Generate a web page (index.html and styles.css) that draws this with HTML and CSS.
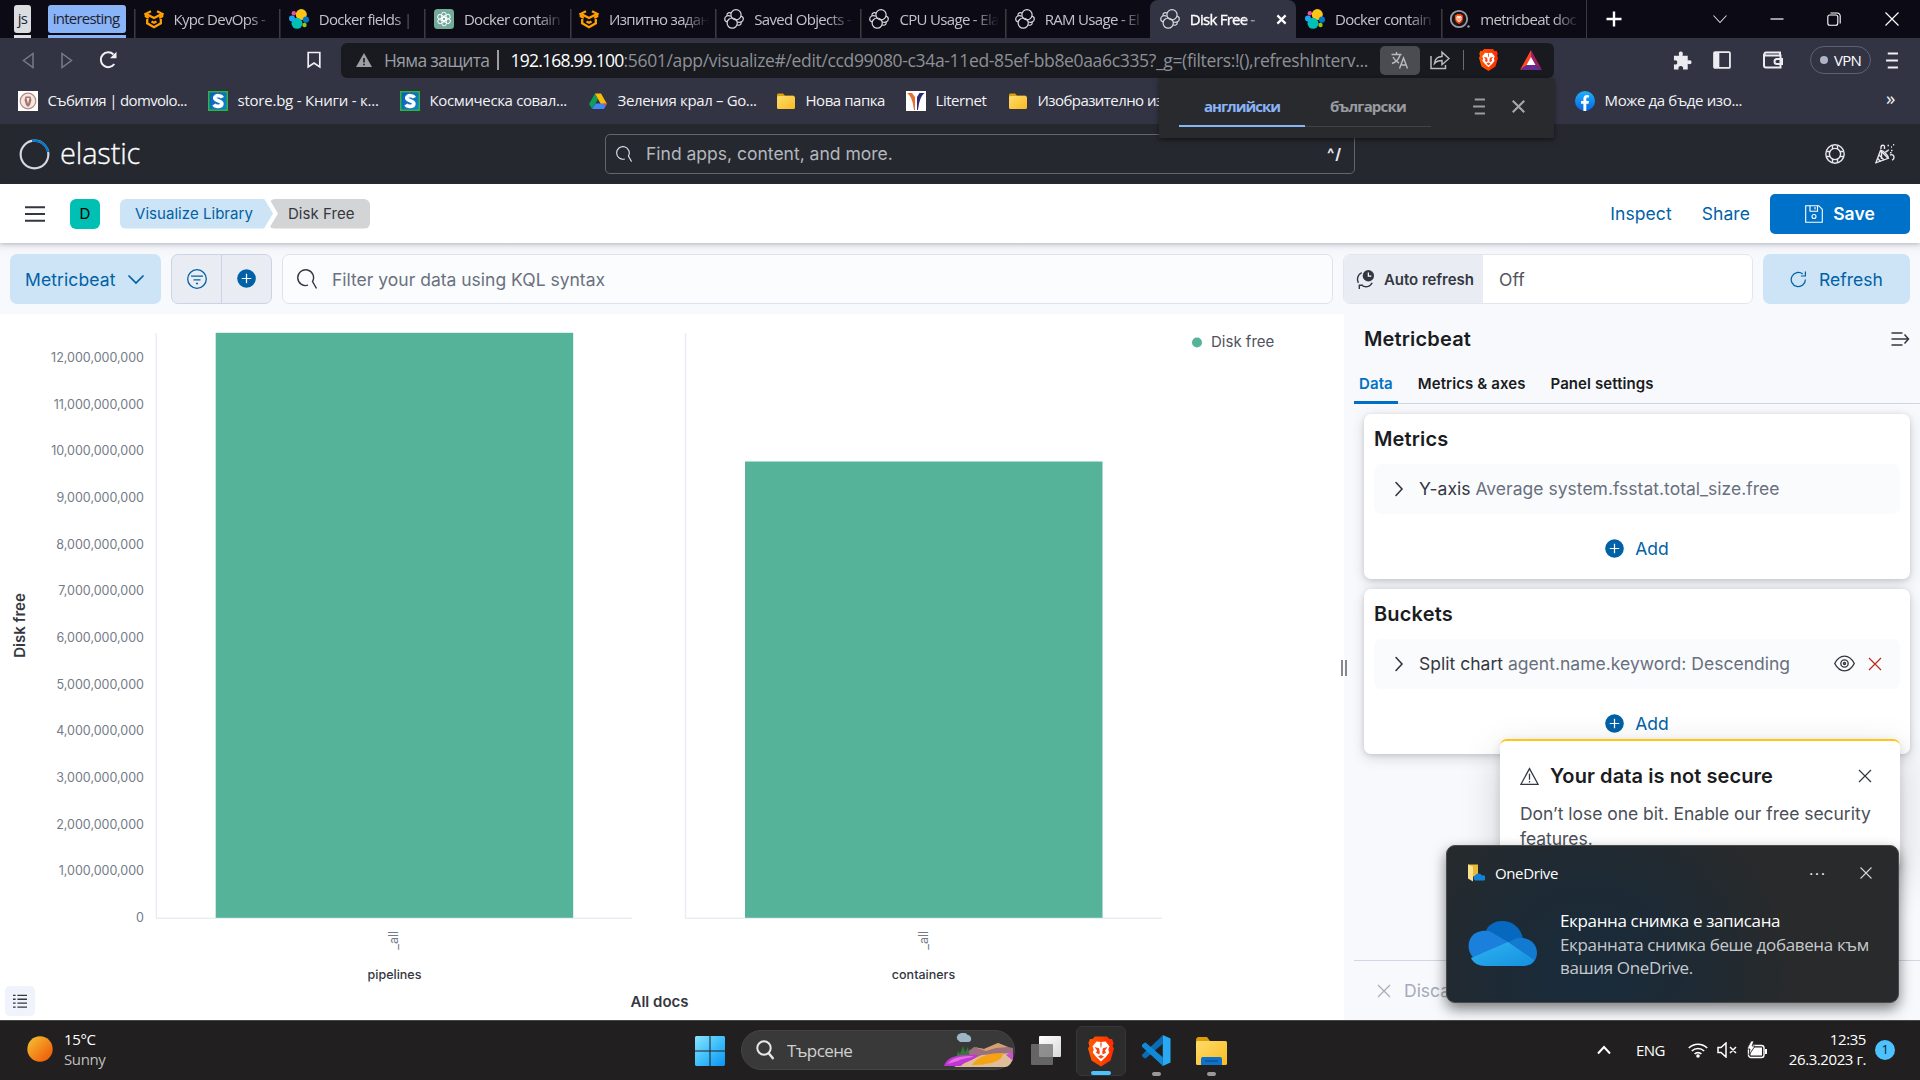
FILE: index.html
```html
<!DOCTYPE html>
<html lang="bg">
<head>
<meta charset="utf-8">
<title>Disk Free - Elastic</title>
<link rel="stylesheet" href="styles.css">
</head>
<body>
<svg class="defs" aria-hidden="true">
  <defs>
    <linearGradient id="g-lion" x1="0" x2="1" y1="0" y2="0"><stop offset="0" stop-color="#ff5a00"/><stop offset="1" stop-color="#ff2a00"/></linearGradient>
    <linearGradient id="g-win" x1="0" y1="0" x2="1" y2="1"><stop offset="0" stop-color="#8be3ff"/><stop offset=".5" stop-color="#3fc0fb"/><stop offset="1" stop-color="#0c92f2"/></linearGradient>
    <linearGradient id="g-sun" x1="0" y1="0" x2="1" y2="1"><stop offset="0" stop-color="#f4c534"/><stop offset=".8" stop-color="#f0670f"/></linearGradient>
    <linearGradient id="g-folder" x1="0" y1="0" x2="1" y2="1"><stop offset="0" stop-color="#ffdb6a"/><stop offset="1" stop-color="#f8bb23"/></linearGradient>
    <linearGradient id="g-s" x1="0" y1="0" x2="1" y2="1"><stop offset="0" stop-color="#0b5fb0"/><stop offset="1" stop-color="#1285cc"/></linearGradient>
    <linearGradient id="g-fb" x1="0" y1="0" x2="0" y2="1"><stop offset="0" stop-color="#1fb0fb"/><stop offset="1" stop-color="#0666e3"/></linearGradient>
    <linearGradient id="g-cloud" x1="0" y1="0" x2="1" y2="1"><stop offset="0" stop-color="#2eb4f0"/><stop offset="1" stop-color="#1590e0"/></linearGradient>
    <linearGradient id="g-task" x1="0" y1="0" x2="1" y2="1"><stop offset="0" stop-color="#ffffff"/><stop offset="1" stop-color="#d8d8d8"/></linearGradient>
  </defs>
  <symbol id="i-softuni" viewBox="0 0 20 20"><g fill="none" stroke="#ffa000" stroke-width="2.300"><path d="M7 2.200 1.800 4.800 10 9l8.200-4.200L13 2.200"/><path d="M1.800 4.800v2.600l3 1.500M18.200 4.800v2.600l-3 1.500"/><path d="M3.200 10v4.300L10 18.200l6.800-3.900V10"/><path d="M7.500 12.500 10 13.800l2.500-1.300"/></g></symbol>
  <symbol id="i-elastic" viewBox="0 0 20 20"><circle cx="12.300" cy="5.600" r="5.500" fill="#fec514"/><circle cx="8" cy="14.300" r="5.500" fill="#00bfb3"/><circle cx="3" cy="9.600" r="3" fill="#1ba9f5"/><circle cx="17" cy="10.700" r="3.100" fill="#0077cc"/><circle cx="4.800" cy="4.200" r="2.200" fill="#f04e98"/><circle cx="15.500" cy="16" r="2.200" fill="#93c90e"/></symbol>
  <symbol id="i-cluster" viewBox="0 0 20 20"><g fill="none" stroke="#d6d8dc" stroke-width="1.200"><circle cx="12" cy="5.800" r="5.100"/><circle cx="8.200" cy="14.100" r="5.100"/><path d="M6.800 7.200C4 5.800.7 7.200.7 10c0 1.600.9 2.500 2.500 2.800M13.200 12.700c2.800 1.500 6.100 0 6.100-2.800 0-1.500-.9-2.500-2.400-2.800"/><path d="M7 4.200c-1.600-1.200-4-.3-4 1.600 0 .4 0 .7.200 1M13.200 15.700c1.600 1.200 4 .3 4-1.600 0-.4-.1-.8-.3-1.200"/></g></symbol>
  <symbol id="i-gpt" viewBox="0 0 20 20"><rect width="20" height="20" rx="3.500" fill="#74aa9c"/><g fill="none" stroke="#fff" stroke-width=".9"><rect x="7.600" y="3.200" width="4.500" height="8.500" rx="2.200"/><rect x="7.600" y="3.200" width="4.500" height="8.500" rx="2.200" transform="rotate(60 10 10)"/><rect x="7.600" y="3.200" width="4.500" height="8.500" rx="2.200" transform="rotate(120 10 10)"/><rect x="7.600" y="3.200" width="4.500" height="8.500" rx="2.200" transform="rotate(180 10 10)"/><rect x="7.600" y="3.200" width="4.500" height="8.500" rx="2.200" transform="rotate(240 10 10)"/><rect x="7.600" y="3.200" width="4.500" height="8.500" rx="2.200" transform="rotate(300 10 10)"/></g></symbol>
  <symbol id="i-lion" viewBox="0 0 26 30"><path fill="url(#g-lion)" d="M7 0h12l2.500 2.600L24 2.500l1.600 4-1 3L26 12l-3.500 12L13 30 3.500 24 0 12l1.400-2.500-1-3L2 2.500l2.500.1z"/><path fill="#fff" d="M13 5.500 17.500 5l4 4.800-1.200 3.500 1 2.700-3.500 4.500L13 25l-4.800-4.500L4.700 16l1-2.700L4.500 9.800 8.500 5z"/><path fill="#fc4510" d="m6.500 10.500 4.500 1.300.8 3.700-.5 2.500L8 16.200l1-2.200zM19.500 10.500 15 11.800l-.8 3.700.5 2.500 3.300-1.800-1-2.200zM10 20l3-1.500 3 1.500-3 2.200zM12.300 6h1.400l-.3 5h-.8z"/></symbol>
  <symbol id="i-bravesearch" viewBox="0 0 20 20"><circle cx="9" cy="10" r="8.200" fill="#15151f" stroke="#9c9ca4" stroke-width="1.800"/><svg x="4.800" y="5" width="8.500" height="10"><use href="#i-lion"/></svg><circle cx="18.500" cy="17.500" r="1.200" fill="#9c9ca4"/></symbol>
  <symbol id="i-folder" viewBox="0 0 20 20"><path fill="#dca10f" d="M1 4.500C1 3 1.500 2.500 3 2.500h4l2 2h8.500V9H1z"/><rect x="1" y="5" width="18" height="13" rx="1.500" fill="url(#g-folder)"/></symbol>
  <symbol id="i-s" viewBox="0 0 20 20"><rect x=".7" y=".7" width="18.600" height="18.600" fill="url(#g-s)" stroke="#2db83d" stroke-width="1.400"/><path fill="none" stroke="#fff" stroke-width="3.600" d="M14.300 6.700C13.300 4.300 6.700 3.600 6.700 7c0 3.200 7.200 2.200 7.200 5.700 0 3.400-6.500 3.400-8 .8"/></symbol>
  <symbol id="i-x" viewBox="0 0 16 16"><path d="M2 2l12 12M14 2 2 14" fill="none" stroke="currentColor" stroke-width="1.200"/></symbol>
  <symbol id="i-plus" viewBox="0 0 20 20"><circle cx="10" cy="10" r="9.800" fill="#0061a6"/><path d="M10 5v10M5 10h10" stroke="#fff" stroke-width="1.300"/></symbol>
  <symbol id="i-mag" viewBox="0 0 20 20"><path d="M11 16.200A7.900 7.900 0 1 1 15.500 12.600L19.500 19.500" fill="none" stroke="currentColor" stroke-width="1.400"/></symbol>
  <symbol id="i-chev" viewBox="0 0 16 16"><path d="m5 1.500 6 6.500-6 6.500" fill="none" stroke="#343741" stroke-width="1.600" stroke-linecap="round"/></symbol>
  <symbol id="i-menu" viewBox="0 0 14 20"><path d="M2 1.700h12M0 10h14M2 18.300h12" stroke="currentColor" stroke-width="2.200"/></symbol>
</svg>

<div class="screen">
<header class="tabstrip">
  <div class="group chip-js"><span>js</span></div>
  <div class="group chip-int"><span>interesting</span></div>
  <div class="tab first"><svg class="i20"><use href="#i-softuni"/></svg><span>Курс DevOps -</span></div>
  <div class="tab"><svg class="i20"><use href="#i-elastic"/></svg><span>Docker fields |</span></div>
  <div class="tab"><svg class="i20"><use href="#i-gpt"/></svg><span>Docker contain</span></div>
  <div class="tab"><svg class="i20"><use href="#i-softuni"/></svg><span>Изпитно задан</span></div>
  <div class="tab"><svg class="i20"><use href="#i-cluster"/></svg><span>Saved Objects -</span></div>
  <div class="tab"><svg class="i20"><use href="#i-cluster"/></svg><span>CPU Usage - Ela</span></div>
  <div class="tab"><svg class="i20"><use href="#i-cluster"/></svg><span>RAM Usage - El</span></div>
  <div class="tab active"><svg class="i20"><use href="#i-cluster"/></svg><span>Disk Free -</span><svg class="tabx" viewBox="0 0 12 12"><path d="m1.500 1.500 9 9m0-9-9 9" stroke="#fff" stroke-width="2.400"/></svg></div>
  <div class="tab after"><svg class="i20"><use href="#i-elastic"/></svg><span>Docker contain</span></div>
  <div class="tab"><svg class="i20"><use href="#i-bravesearch"/></svg><span>metricbeat doc</span></div>
  <div class="winctl">
    <svg class="newtab" viewBox="0 0 16 16"><path d="M8 .5v15M.5 8h15" stroke="#fff" stroke-width="2.400"/></svg>
    <svg class="wc1" viewBox="0 0 14 14"><path d="m.5 3.500 6.500 7 6.500-7" fill="none" stroke="#d8d8dc" stroke-width="1.100"/></svg>
    <svg class="wc2" viewBox="0 0 14 14"><path d="M.5 7h13" stroke="#fff" stroke-width="1.200"/></svg>
    <svg class="wc3" viewBox="0 0 14 14"><g fill="none" stroke="#fff" stroke-width="1.100"><rect x=".8" y="3" width="10" height="10.200" rx="2"/><path d="M3.500 1h6.700a3 3 0 0 1 3 3v7.500"/></g></svg>
    <svg class="wc4" viewBox="0 0 14 14"><path d="m.5.5 13 13m0-13-13 13" stroke="#fff" stroke-width="1.200"/></svg>
  </div>
</header>

<div class="toolbar">
  <svg class="t-back" viewBox="0 0 12 16"><path d="M11 1 1.500 8 11 15z" fill="none" stroke="#787a88" stroke-width="1.500"/></svg>
  <svg class="t-fwd" viewBox="0 0 12 16"><path d="M1 1l9.500 7L1 15z" fill="none" stroke="#787a88" stroke-width="1.500"/></svg>
  <svg class="t-reload" viewBox="0 0 18 18"><path d="M15.300 13A7.400 7.400 0 1 1 14.500 3.500" fill="none" stroke="#f0f0f4" stroke-width="2"/><path d="M17.500.8v6.500h-6.500z" fill="#f0f0f4"/></svg>
  <svg class="t-bm" viewBox="0 0 14 17"><path d="M1.200 1h11.600v14.500L7 11.500l-5.800 4z" fill="none" stroke="#f0f0f4" stroke-width="1.700"/></svg>
  <div class="url">
    <svg class="u-warn" viewBox="0 0 16 14"><path d="M8 0l8 14H0z" fill="#9c9fa3"/><path d="M8 5v4.500m0 1.200v1.600" stroke="#181a20" stroke-width="1.600"/></svg>
    <span class="u-sec">Няма защита</span><i class="u-div"></i>
    <span class="u-addr"><b>192.168.99.100</b>:5601/app/visualize#/edit/ccd99080-c34a-11ed-85ef-bb8e0aa6c335?_g=(filters:!(),refreshInterv...</span>
    <span class="u-tr"><svg viewBox="0 0 18 18"><g fill="none" stroke="#b9bbc0" stroke-width="1.400"><path d="M.5 3.500h10M5.500 1v2.500M2 6c1.500 3 4 5 6 6M9 4c-1 4-4 7-8 8.500"/><path d="m8.500 17.500 4-10.500 4 10.500M10 14h5.500"/></g></svg></span>
    <svg class="u-share" viewBox="0 0 20 20"><g fill="none" stroke="#b9bbc0" stroke-width="1.500"><path d="M1 6v12.500h14.500V15"/><path d="M4.500 13.500C5 9 8 6.500 12 6.500V2.200l7 6.300-7 6.200v-4.200c-3.500 0-5.800 1-7.500 3z"/></g></svg>
    <i class="u-div2"></i>
    <svg class="u-lion"><use href="#i-lion"/></svg>
    <svg class="u-bat" viewBox="0 0 22 20"><path fill="#ff4724" d="M11 0 0 20l7-5 4-7z"/><path fill="#9e1f63" d="m11 0 11 20-7-5-4-7z"/><path fill="#662d91" d="M0 20l7-5h8l7 5z"/><path fill="#fff" d="m11 7 4.500 8h-9z"/></svg>
  </div>
  <svg class="t-puz" viewBox="0 0 20 20"><path fill="#ececf0" d="M1 5h5.500C5.500 2 6.500.5 8.200.5s2.800 1.500 1.800 4.500h5.500v5c3-1 4 .2 4 1.800s-1.200 2.700-4 1.700v6h-5c.8-2.500-.5-3.800-2.300-3.800S5 17 6 19.500H1v-5.500c2.500.7 3.500-.5 3.500-2S3.300 9.300 1 10z"/></svg>
  <svg class="t-side" viewBox="0 0 17 17"><rect x="1" y="1" width="15" height="15" rx="1" fill="none" stroke="#ececf0" stroke-width="1.700"/><path d="M1 1h5v15H1z" fill="#ececf0"/></svg>
  <svg class="t-wal" viewBox="0 0 20 17"><g fill="none" stroke="#ececf0" stroke-width="2"><path d="M17 5V1H3C1 1 1 4 3 4h14.500v12H3c-1.200 0-2-.8-2-2V2.500"/><path d="M20 7.500h-6a2.500 2.500 0 0 0 0 5h5V7"/></g></svg>
  <span class="vpn"><i></i>VPN</span>
  <svg class="t-menu"><use href="#i-menu"/></svg>
</div>

<nav class="bookmarks">
  <div class="bm w190"><svg class="i20" viewBox="0 0 20 20"><rect width="20" height="20" fill="#fff"/><circle cx="10" cy="10" r="7.800" fill="#f2e7e2" stroke="#b78d82" stroke-width="1.200"/><path d="M7.500 5.500h5l1 3.500-1.500 5-2 2-2-2L6.500 9z" fill="#a5746c"/><path d="m8.500 7 1.500 6 1.500-6z" fill="#f4ece6"/></svg><span>Събития | domvolo...</span></div>
  <div class="bm w192"><svg class="i20"><use href="#i-s"/></svg><span>store.bg - Книги - к...</span></div>
  <div class="bm w188"><svg class="i20"><use href="#i-s"/></svg><span>Космическа совал...</span></div>
  <div class="bm w188"><svg class="i20" viewBox="0 0 20 20"><path fill="#0f9d58" d="M7 2.500 1 13l3.200 5L10 8z"/><path fill="#fbbc04" d="M7 2.500h6L19 13h-6.200z"/><path fill="#4285f4" d="M7.500 12.500H19L16 18H4.200z"/><path fill="#ea4335" d="M15.500 12.500H19l-1.500 3z"/></svg><span>Зеления крал – Go...</span></div>
  <div class="bm w130"><svg class="i20"><use href="#i-folder"/></svg><span>Нова папка</span></div>
  <div class="bm w102"><svg class="i20" viewBox="0 0 20 20"><rect width="20" height="20" fill="#fff"/><path d="M1 2h5l3 4v13H8C7 12 6 6 1 2z" fill="#e8702a"/><path d="M18.500 2h-5L11 6v13h1c1-7 2-13 6.500-17z" fill="#2b2a78"/></svg><span>Liternet</span></div>
  <div class="bm wcut"><svg class="i20"><use href="#i-folder"/></svg><span>Изобразително изк...</span></div>
  <div class="bm wfb"><svg class="i20" viewBox="0 0 20 20"><circle cx="10" cy="10" r="10" fill="url(#g-fb)"/><path fill="#fff" d="M8.400 20v-7.200H6V10h2.400V7.800C8.400 5.300 9.800 4 12 4l1.900.2v2.300h-1.200c-1.100 0-1.400.7-1.400 1.400V10h2.600l-.4 2.800h-2.200V20z"/></svg><span>Може да бъде изо...</span></div>
  <span class="more">»</span>
</nav>

<header class="ehead">
  <svg class="ring" viewBox="0 0 32 32"><circle cx="16" cy="16" r="14.300" fill="none" stroke="#d3dae6" stroke-width="2.200"/><path d="M13.500 1.900A14.300 14.300 0 0 1 30 13.500" fill="none" stroke="#0077cc" stroke-width="2.400"/></svg>
  <span class="word">elastic</span>
  <div class="gsearch"><svg class="i16"><use href="#i-mag"/></svg><span>Find apps, content, and more.</span><b>^/</b></div>
  <svg class="help" viewBox="0 0 20 20"><g fill="none" stroke="#e6e8ec" stroke-width="1.400"><circle cx="10" cy="10" r="9.200"/><circle cx="10" cy="10" r="5.600"/><path d="M7.500 1.300v4M12.500 1.300v4M7.500 14.700v4M12.500 14.700v4M1.300 7.500h4M1.300 12.500h4M14.700 7.500h4M14.700 12.500h4"/></g></svg>
  <svg class="cheer" viewBox="0 0 20 20"><g fill="none" stroke="#e6e8ec" stroke-width="1.400"><path d="M5.500 6.500.9 18.800l12.300-4.500z"/><path d="M5.500 6.500c2-1 8.500 5.500 7.700 7.800M4 11l5 5M2.700 14.500l3 3M6.500 8v7"/><path d="M6 5V3.500C6 .5 9.500.5 9.500 3v2M10.500 8.500c.5-2 3-1 3-3M15 11c2.500-1 4 .5 4 2.500s-1 2-2 2.500"/><path d="M12.500 1.500h1.500M16 3h1M18 .8h1.200M16 6.500h2.500M15 8.800h1.500" stroke-dasharray="1.500 1"/></g></svg>
</header>

<div class="appbar">
  <svg class="burger" viewBox="0 0 20 16"><path d="M0 1.200h20M0 8h20M0 14.800h20" stroke="#343741" stroke-width="2"/></svg>
  <span class="avatar">D</span>
  <span class="crumb c1">Visualize Library</span><span class="crumb c2">Disk Free</span>
  <div class="actions"><span>Inspect</span><span>Share</span>
    <span class="save"><svg viewBox="0 0 18 18"><g fill="none" stroke="#fff" stroke-width="1.100"><path d="M.7.7h13l3.600 3.600v13H.7z"/><path d="M5 .7v5.600h7.500V.7M10 2v2.500"/><circle cx="9" cy="11.500" r="2"/></g></svg>Save</span></div>
</div>

<div class="filterbar">
  <div class="dv">Metricbeat<svg viewBox="0 0 16 16"><path d="m1 5 7 7 7-7" fill="none" stroke="#0061a6" stroke-width="1.700" stroke-linecap="round"/></svg></div>
  <div class="fgroup"><span><svg class="i20" viewBox="0 0 20 20"><g fill="none" stroke="#0061a6" stroke-width="1.300"><circle cx="10" cy="10" r="9.300"/><path d="M4 7.200h12M6.500 10.800h7M9 14.500h2"/></g></svg></span><span><svg class="i19"><use href="#i-plus"/></svg></span></div>
  <div class="kql"><svg class="i20"><use href="#i-mag"/></svg><span>Filter your data using KQL syntax</span></div>
  <div class="auto"><div><svg class="i19" viewBox="0 0 19 20"><circle cx="12.500" cy="6" r="6" fill="#343741"/><path d="M12.500 2.500V6.500h3.200" fill="none" stroke="#fff" stroke-width="1.300"/><path d="M5.500 2.800C1 5 0 10 2 13.500M16.500 13.500c-2 4.500-7.500 5.200-11 2.500M7 16H3v4" fill="none" stroke="#343741" stroke-width="1.500"/></svg>Auto refresh</div><span>Off</span></div>
  <div class="refresh"><svg viewBox="0 0 18 18"><path d="M16.300 9A7.500 7.500 0 1 1 13.500 3.200M16.300.5v4.800h-4.800" fill="none" stroke="#0061a6" stroke-width="1.300"/></svg>Refresh</div>
</div>

<main class="work">
  <section class="viz">
    <svg class="chart" width="1344" height="706" viewBox="0 314 1344 706">
      <g stroke="#eaedf3" stroke-width="1.500"><path d="M156.300 333v585M156 918.300H632M685.500 333v585M685 918.300h477"/></g>
      <g fill="#54b399"><rect x="215.700" y="332.800" width="357.500" height="585"/><rect x="745" y="461.500" width="357.500" height="456.300"/></g>
      <g class="tick">
        <text x="144" y="362">12,000,000,000</text><text x="144" y="408.700">11,000,000,000</text><text x="144" y="455.300">10,000,000,000</text><text x="144" y="502">9,000,000,000</text><text x="144" y="548.700">8,000,000,000</text><text x="144" y="595.300">7,000,000,000</text><text x="144" y="642">6,000,000,000</text><text x="144" y="688.700">5,000,000,000</text><text x="144" y="735.300">4,000,000,000</text><text x="144" y="782">3,000,000,000</text><text x="144" y="828.700">2,000,000,000</text><text x="144" y="875.300">1,000,000,000</text><text x="144" y="922">0</text>
        <text transform="translate(398 931) rotate(-90)">_all</text><text transform="translate(927.500 931) rotate(-90)">_all</text>
      </g>
      <g class="sub"><text x="394.500" y="979">pipelines</text><text x="923.500" y="979">containers</text></g>
      <g class="axis"><text x="659.500" y="1006.500">All docs</text><text transform="translate(25 625.500) rotate(-90)">Disk free</text></g>
      <circle cx="1197" cy="342.500" r="5" fill="#54b399"/><text class="leg" x="1211" y="347">Disk free</text>
    </svg>
    <span class="listbtn"><svg viewBox="0 0 16 16"><path d="M0 1.500h3M5 1.500h11M0 6h3M5 6h11M0 10.500h3M5 10.500h11M0 15h3M5 15h11" stroke="#343741" stroke-width="1.500"/></svg></span>
    <span class="grip"></span>
  </section>
  <aside class="side">
    <div class="shead"><h2>Metricbeat</h2><svg viewBox="0 0 19 16"><path d="M1 2h11M1 8h17M1 14h11M14 3.500 18 8l-4 4.500" fill="none" stroke="#343741" stroke-width="1.500"/></svg></div>
    <div class="tabs"><span class="on">Data</span><span>Metrics &amp; axes</span><span>Panel settings</span></div>
    <div class="cards">
      <div class="card"><h3>Metrics</h3><div class="row"><svg class="i16"><use href="#i-chev"/></svg><span>Y-axis <em>Average system.fsstat.total_size.free</em></span></div><div class="add"><svg class="i19"><use href="#i-plus"/></svg>Add</div></div>
      <div class="card"><h3>Buckets</h3><div class="row"><svg class="i16"><use href="#i-chev"/></svg><span>Split chart <em>agent.name.keyword: Descending</em></span><svg class="eye" viewBox="0 0 20 16"><g fill="none" stroke="#343741" stroke-width="1.300"><path d="M.7 8C3 3.500 6 1 10 1s7 2.500 9.300 7C17 12.500 14 15 10 15S3 12.500.7 8z"/><circle cx="10" cy="8" r="3.500"/><circle cx="10" cy="8" r="1"/></g></svg><svg class="i16 red"><use href="#i-x"/></svg></div><div class="add"><svg class="i19"><use href="#i-plus"/></svg>Add</div></div>
    </div>
    <div class="foot"><svg class="i16"><use href="#i-x"/></svg>Discard</div>
  </aside>
</main>

<footer class="taskbar">
  <svg class="sun" viewBox="0 0 26 26"><circle cx="13" cy="13" r="12.700" fill="url(#g-sun)"/></svg>
  <div class="wx"><span>15°C</span><span>Sunny</span></div>
  <svg class="win" viewBox="0 0 29 29"><path fill="url(#g-win)" d="M1 0h13v14H0V1zM15 0h13l1 1v13H15zM0 15h14v14H1l-1-1zM15 15h14v13l-1 1H15z"/></svg>
  <div class="tsearch"><svg class="tmag" viewBox="0 0 18 20"><circle cx="8" cy="8" r="6.700" fill="none" stroke="#e8e8e8" stroke-width="2"/><path d="m12.500 13 5 6" stroke="#e8e8e8" stroke-width="2.400"/></svg><span>Търсене</span>
    <svg class="art" viewBox="0 0 70 34"><path d="M15 8a4 4 0 0 1 1-7.500C19-.8 23 0 23.500 2 27.500 2 28.500 8 25 9H16z" fill="#9db6c6"/><path d="M22 20 30 14l10 2 14-6 10 4 5 1v11H22z" fill="#9b7180"/><path d="M30 14l10 2 14-6 10 4-12 1-10 3z" fill="#d6a06c"/><path d="M12 25l2-7 2 3 3-8 2 6 3-5 2 11z" fill="#2f7a35"/><path d="M10 34 38 22l31-2v3c0 6-4 11-8 11z" fill="#dfbd98"/><path d="M0 33c3-11 18-12 34-11-4 6-13 6-17 11z" fill="#c136d0"/><path d="M3 31c6-7 14-8 27-8-6 3-12 2-16 5z" fill="#e070e6"/><path d="M28 32c6-9 17-12 31-12 0 9-16 12-31 12z" fill="#f5a314"/><path d="M62 22l7-4v10z" fill="#c552ca"/></svg></div>
  <svg class="tview" viewBox="0 0 30 29"><rect x="8" y="0" width="22" height="21" rx="1" fill="url(#g-task)"/><rect x="0" y="8" width="22" height="21" rx="1" fill="#777" fill-opacity=".8"/></svg>
  <div class="app on"><svg class="tlion"><use href="#i-lion"/></svg><i></i></div>
  <div class="app code"><svg viewBox="0 0 30 32"><path d="M.5 20.500 18 4l4-4v9L4 24.500 1 22.500z" fill="#0a6cb4"/><path d="M.5 10 4 7.500 22 23v9l-4-4L.5 12z" fill="#1289d6"/><path d="m22 0 8 3.500v25L22 32z" fill="#29a9f2"/></svg><i></i></div>
  <div class="app files"><svg viewBox="0 0 31 28"><path d="M0 3c0-2 1-3 3-3h8l3 4h14v8H0z" fill="#dc9b08"/><rect y="4" width="31" height="24" rx="1.500" fill="url(#g-folder)"/><path d="M5 28v-6c0-1.500 1-2 2-2h16.500c1.500 0 2.500.5 2.500 2v6z" fill="#0f72c8"/><path d="M9 24h13" stroke="#0a4e96" stroke-width="1.300"/></svg><i></i></div>
  <div class="tray">
    <svg class="up" viewBox="0 0 14 10"><path d="m1 8.500 6-6.500 6 6.500" fill="none" stroke="#fff" stroke-width="2"/></svg>
    <span class="eng">ENG</span>
    <svg class="wifi" viewBox="0 0 20 16"><g fill="none" stroke="#fff" stroke-width="1.600"><path d="M.8 6a13 13 0 0 1 18.400 0M3.800 9a8.800 8.800 0 0 1 12.400 0M6.600 12a4.800 4.800 0 0 1 6.800 0"/></g><circle cx="10" cy="14" r="1.800" fill="#fff"/></svg>
    <svg class="snd" viewBox="0 0 20 16"><g fill="none" stroke="#fff" stroke-width="1.500"><path d="M1 5.500h3L9 1v14l-5-4.500H1zM13 5l6 6m0-6-6 6"/></g></svg>
    <svg class="batt" viewBox="0 0 20 18"><rect x="1.500" y="4.500" width="15.500" height="12" rx="2.500" fill="none" stroke="#fff" stroke-width="1.400"/><path d="M7 6.500h8v8H3.500V12zM18 8h2v5h-2z" fill="#fff"/><path d="M4 0 0 8h3l-1 6 6-9H5l2-5z" fill="#fff" stroke="#201f1f" stroke-width=".8"/></svg>
    <div class="clock"><span>12:35</span><span>26.3.2023 г.</span></div>
    <span class="badge">1</span>
  </div>
</footer>

<div class="translate"><span class="tr-on">английски</span><span class="tr-off">български</span><svg class="tr-m"><use href="#i-menu"/></svg><svg class="tr-x" viewBox="0 0 12 12"><path d="m.7.7 10.600 10.600m0-10.600L.7 11.300" stroke="#a6a8ac" stroke-width="1.900"/></svg></div>

<div class="secure">
  <div class="sec-h"><svg viewBox="0 0 18 17"><g fill="none" stroke="#343741" stroke-width="1.200"><path d="M9 1 17.200 16H.8z"/><path d="M9 6v5.500M9 12.700v1.600"/></g></svg><h3>Your data is not secure</h3><svg class="i16"><use href="#i-x"/></svg></div>
  <p>Don’t lose one bit. Enable our free security<br>features.</p>
</div>

<div class="toast">
  <div class="t-h"><svg viewBox="0 0 17 17"><path d="M0 0h10v12H0z" fill="#e9b83c"/><path d="M0 0 5 2v15L0 14z" fill="#ffe08a"/><path d="M7 16a3 3 0 0 1 0-5 4 4 0 0 1 7 0 2.500 2.500 0 0 1 2 5z" fill="#1283d8"/></svg><span>OneDrive</span><b>···</b><svg class="t-x" viewBox="0 0 12 12"><path d="m.5.5 11 11m0-11-11 11" stroke="#d5d5d5" stroke-width="1.100"/></svg></div>
  <div class="t-b"><svg viewBox="0 0 69 45"><path d="M17 12C20 3 27 0 34 0c11 0 19 7 21 18L40 28z" fill="#0668bf"/><path d="M14 10c6-1 10 1 14 4l14 8-30 18C-3 37-4 12 14 10z" fill="#1b80dc"/><path d="M40 22c4-3 9-6 15-5 18 2 17 24 6 27z" fill="#137ad2"/><path d="M3 37l37-16 26 18c-2 4-6 6-11 6H17C11 45 5 42 3 37z" fill="url(#g-cloud)"/></svg><p><b>Екранна снимка е записана</b><br>Екранната снимка беше добавена към<br>вашия OneDrive.</p></div>
</div>
</div>
</body>
</html>
```
FILE: styles.css
```css
*{box-sizing:border-box}
body{margin:0;background:#000}
.defs{position:absolute;width:0;height:0}
svg{display:block;flex:none}
h2,h3,p{margin:0}
.screen{position:relative;width:1920px;height:1080px;overflow:hidden;display:flex;flex-direction:column;font-family:"Inter","Liberation Sans",sans-serif;color:#343741}
.i20{width:20px;height:20px}
.i19{width:19px;height:19px}
.i16{width:16px;height:16px}
.tabstrip,.toolbar,.bookmarks,.taskbar,.translate,.toast{font-family:"Open Sans","Noto Sans",sans-serif;font-size:15px;letter-spacing:-.045em;white-space:nowrap}

/* browser tabs */
.tabstrip{height:38px;background:#0c0b15;display:flex;align-items:stretch}
.group{height:38px;display:flex;align-items:flex-start;padding-top:5px;border-bottom:3px solid}
.group span{display:block;height:28px;line-height:26px;border-radius:3px;color:#202230;text-align:center;letter-spacing:-.05em}
.chip-js{width:17px;margin-left:14px;border-color:#dcdde0}
.chip-js span{background:#dcdde0;width:17px}
.chip-int{width:78px;margin-left:17px;border-color:#8ab4f8}
.chip-int span{background:#8ab4f8;width:78px;padding-right:2px}
.tab{width:145.200px;display:flex;align-items:center;padding-left:9.500px;gap:10px;position:relative;color:#c3c4c9;background:linear-gradient(#3c3c3e,#3c3c3e) 0 100%/1.500px 29px no-repeat}
.tab.first{margin-left:8px}
.tab span{width:102px;overflow:hidden;line-height:26px;margin-top:-1px;-webkit-mask:linear-gradient(90deg,#000 72%,transparent 98%);mask:linear-gradient(90deg,#000 72%,transparent 98%)}
.tab.active{background:#323443;border-radius:8px 8px 0 0;color:#fff}
.tab.active span{width:74px;-webkit-text-stroke:.35px #fff;letter-spacing:-.05em}
.tab.after{background:none}
.tabx{width:11px;height:11px;margin-left:2px}
.winctl{flex:1;display:flex;align-items:center;border-left:1.500px solid #3c3c3e;padding-left:19px}
.newtab{width:16px;height:16px}
.wc1{width:14px;height:14px;margin-left:91px}
.wc2{width:14px;height:14px;margin-left:43px}
.wc3{width:14px;height:14px;margin-left:43px}
.wc4{width:14px;height:14px;margin-left:44px}

/* address row */
.toolbar{height:45px;background:#323443;display:flex;align-items:center;padding:0 0 1px 22px}
.t-back,.t-fwd{width:12px;height:17px}
.t-fwd{margin-left:27px}
.t-reload{width:18px;height:18px;margin-left:26px}
.t-bm{width:14px;height:18px;margin-left:190px}
.url{width:1213px;height:35px;margin:1px 0 0 20px;background:#181a20;border-radius:6px;display:flex;align-items:center;padding:0 0 1px 15px;font-size:17.500px;color:#8d9095}
.u-warn{width:16px;height:14px}
.u-sec{width:105px;margin-left:12px;color:#9b9ea3}
.u-div{width:1.500px;height:20px;background:#9b9ea3;margin-left:8px}
.u-addr{width:858px;margin-left:12px;letter-spacing:-.0195em}
.u-addr b{font-weight:400;color:#fff;letter-spacing:-.044em}
.u-tr{width:40px;height:29px;margin-left:11px;border-radius:5px;background:#4a4c51;display:flex;align-items:center;justify-content:center}
.u-tr svg{width:18px;height:18px}
.u-share{width:20px;height:20px;margin-left:10px}
.u-div2{width:1.500px;height:20px;background:#696c72;margin-left:13px}
.u-lion{width:21px;height:22px;margin-left:14px}
.u-bat{width:22px;height:20px;margin-left:21px}
.t-puz{width:19px;height:19px;margin-left:119px}
.t-side{width:18px;height:18px;margin-left:21px}
.t-wal{width:20px;height:18px;margin-left:32px}
.vpn{width:61px;height:28px;margin-left:27px;border:1.500px solid #5e6076;border-radius:14px;display:flex;align-items:center;justify-content:center;gap:6px;color:#fff;padding-bottom:1px}
.vpn i{width:8px;height:8px;border-radius:50%;background:#b0b2c8}
.t-menu{width:12px;height:17px;margin-left:15px;color:#f0f0f4}

/* bookmarks */
.bookmarks{height:41px;background:#323443;display:flex;align-items:center;padding:0 0 5px 18px;color:#f3f3f5;letter-spacing:-.024em}
.bm{display:flex;align-items:center;gap:9.500px}
.bm span{margin-top:-2px}
.w190{width:190px;letter-spacing:-.044em}.w192{width:192px;letter-spacing:-.015em}.w188{width:188px}.w130{width:130px;letter-spacing:-.03em}.w102{width:102px;letter-spacing:-.03em}
.wcut{width:567px;letter-spacing:-.038em}
.wfb{width:311px}
.more{font-size:19px;line-height:20px;margin-top:-6px;width:30px}

/* elastic header */
.ehead{height:60px;background:#25282f;display:flex;align-items:center;color:#fff}
.ring{width:31px;height:31px;margin-left:19px}
.word{font:300 29px "Open Sans",sans-serif;letter-spacing:-.006em;margin:-3px 0 0 10px;width:85px;-webkit-text-stroke:.3px #fff}
.gsearch{width:750px;height:40px;margin-left:460px;border:1.500px solid #63666d;border-radius:5px;display:flex;align-items:center;padding:0 12px 1px 10px;font-size:17.500px;letter-spacing:0;color:#b4b7bd}
.gsearch span{margin-left:14px;flex:1}
.gsearch b{color:#e8eaee;font-weight:700;font-size:15px;letter-spacing:.06em}
.gsearch svg{color:#dfe5ef}
.help{width:20px;height:20px;margin-left:470px}
.cheer{width:20px;height:20px;margin-left:30px}

.appbar{height:59px;background:#fff;display:flex;align-items:center;padding:0 10px 0 25px;box-shadow:0 1px 5px rgba(50,60,80,.35);position:relative;font-size:15px}
.burger{width:20px;height:16px}
.avatar{width:30px;height:30px;margin-left:25px;border-radius:6px;background:#00bfb3;color:#000;font-size:15px;line-height:30px;text-align:center}
.crumb{height:30px;line-height:30px;border-radius:6px}
.c1{width:153px;margin-left:20px;padding-left:15px;background:#cce4f5;color:#0061a6;letter-spacing:.003em;clip-path:polygon(0 0,144px 0,100% 50%,144px 100%,0 100%)}
.c2{width:101px;margin-left:-4px;padding-left:19px;background:#d3d4d6;letter-spacing:.003em;clip-path:polygon(0 0,100% 0,100% 100%,0 100%,9px 50%)}
.actions{margin-left:auto;display:flex;align-items:center;font-size:17.500px;letter-spacing:.004em;color:#0061a6}
.actions span+span{margin-left:30px}
.actions .save{width:140px;height:40px;margin-left:20px;border-radius:5px;background:#0071c8;color:#fff;font-weight:600;display:flex;align-items:center;justify-content:center;gap:10px}
.save svg{width:18px;height:18px}

.filterbar{height:71px;background:linear-gradient(#f0f2f6 0,#f8f9fd 14px);display:flex;align-items:center;padding:0 10px;font-size:17.500px;letter-spacing:0;color:#0061a6}
.filterbar>div{height:50px;border-radius:7px;display:flex;align-items:center}
.dv{width:151px;background:#cce4f5;padding:1px 0 0 15px;gap:12px;letter-spacing:.006em}
.dv svg{width:16px;height:16px}
.fgroup{width:101px;margin-left:10px;background:#e9edf3;border:1px solid #ccd3e4}
.fgroup span{flex:1;height:48px;display:flex;align-items:center;justify-content:center}
.fgroup span+span{border-left:1px solid #ccd3e4}
.kql{width:1051px;margin-left:10px;background:#fbfcfe;border:1px solid #dfe2ee;padding:1px 0 0 14px;gap:15px;color:#6a717d}
.kql svg{color:#343741}
.auto{width:410px;margin-left:10px;background:#fff;border:1px solid #e3e6ef;overflow:hidden;color:#50545d}
.auto div{width:139px;height:50px;background:#e9edf3;display:flex;align-items:center;gap:9px;padding:1px 0 0 12px;font-size:15px;letter-spacing:-.003em;font-weight:600;color:#343741}
.auto span{padding:1px 0 0 16px}
.refresh{width:147px;margin-left:10px;background:#cce4f5;justify-content:center;gap:12px;padding-top:1px}
.refresh svg{width:17px;height:17px}

.work{height:706px;display:flex}
.viz{width:1344px;position:relative;background:#fff}
.chart text{font-family:"Inter",sans-serif}
.tick text{font-size:12.500px;fill:#747b87;text-anchor:end}
.sub text{font-size:12.500px;font-weight:500;fill:#343741;text-anchor:middle}
.axis text{font-size:15px;font-weight:600;fill:#343741;text-anchor:middle}
.leg{font-size:15px;fill:#4f535c}
.listbtn{position:absolute;left:5px;bottom:4px;width:30px;height:30px;border-radius:5px;background:#f0f3fb;display:flex;align-items:center;justify-content:center}
.listbtn svg{width:16px;height:14px}
.grip{position:absolute;z-index:2;left:1341px;top:346px;width:6px;height:16px;border:solid #85888f;border-width:0 2px}
.side{flex:1;background:#f8f9fd;display:flex;flex-direction:column;padding-left:10px}
.shead{height:50px;display:flex;align-items:center;justify-content:space-between;padding:0 10px 0 10px}
.shead svg{width:20px;height:16px}
h2,h3{font-size:20px;font-weight:600;letter-spacing:.008em;color:#1a1c21;line-height:24px}
.tabs{height:40px;display:flex;gap:20px;border-bottom:1px solid #d0d6e2}
.tabs span{height:40px;line-height:39px;padding:0 5px;font-size:15px;letter-spacing:.006em;font-weight:600;color:#1a1c21;margin-right:-5px}
.tabs .on{color:#0071c2;border-bottom:3px solid #0071c2;margin-right:-5px}
.cards{padding:10px 10px;display:flex;flex-direction:column;gap:10px;flex:1}
.card{height:165px;border-radius:7px;background:#fff;box-shadow:0 1px 5px rgba(0,0,0,.12),0 4px 14px rgba(0,0,0,.14);padding:13px 10px}
.row{height:50px;margin-top:13px;border-radius:7px;background:#fafbfd;display:flex;align-items:center;padding:0 0 1px 17px;font-size:17.500px;letter-spacing:.001em}
.row span{margin-left:12px}
.row em{font-style:normal;color:#69707d}
.eye{width:21px;height:17px;margin-left:auto}
.red{color:#bd271e;margin:0 17px 0 12px}
.add{height:68px;display:flex;align-items:center;justify-content:center;gap:11px;font-size:17.500px;color:#0061a6}
.foot{height:60px;border-top:1px solid #d0d6e6;display:flex;align-items:center;padding-left:22px;gap:12px;font-size:17.500px;color:#a4abb9}

.secure{position:absolute;left:1500px;top:739px;width:400px;height:130px;background:#fff;border-top:2.500px solid #fec514;border-radius:7px;box-shadow:0 3px 10px rgba(0,0,0,.12),0 15px 40px rgba(0,0,0,.18);padding:23px 20px}
.sec-h{display:flex;align-items:center}
.sec-h>svg:first-child{width:19px;height:19px}
.sec-h h3{margin-left:11px;flex:1;letter-spacing:.004em}
.sec-h .i16{margin-right:7px}
.secure p{margin-top:13px;font-size:17.500px;line-height:25px;letter-spacing:-.002em;color:#4b4f58;white-space:nowrap}

.toast{position:absolute;left:1446px;top:845px;width:453px;height:158px;border:1px solid #4a4a4a;border-radius:9px;background:radial-gradient(circle at 140px 130px,#192b3b 0,#1d2a35 90px,transparent 200px),#282a2b;box-shadow:0 6px 14px rgba(0,0,0,.5);color:#fff}
.t-h{display:flex;align-items:center;height:53px;padding:0 26px 0 21px}
.t-h svg{width:17px;height:18px}
.t-h span{margin-left:10px;flex:1;letter-spacing:-.025em}
.t-h b{font-weight:400;letter-spacing:2px;margin-right:33px}
.t-h .t-x{width:12px;height:12px}
.t-b{display:flex;padding:10px 0 0 21px;align-items:flex-start}
.t-b svg{width:69px;height:45px;margin-top:12px}
.t-b p{margin-left:23px;font-size:17px;line-height:23.500px;letter-spacing:-.021em;color:#c6c9cc}
.t-b b{font-weight:400;color:#fff}

.translate{position:absolute;left:1159px;top:78px;width:395px;height:60px;background:#292a2d;box-shadow:0 2px 5px rgba(0,0,0,.5);display:flex;align-items:flex-start;padding:10px 0 0 20px;font-weight:700;color:#999ca1}
.translate span{width:126px;height:39px;text-align:center;line-height:37px;letter-spacing:-.055em;border-bottom:1px solid #424347}
.translate .tr-on{color:#8ab4f8;border-bottom:2px solid #8ab4f8;letter-spacing:-.068em}
.tr-m{width:12px;height:17px;margin:10px 0 0 42px}
.tr-x{width:13px;height:13px;margin:12px 0 0 27px}

.taskbar{height:60px;background:#211f1f;border-top:1px solid #484646;display:flex;align-items:center;color:#fff;letter-spacing:-.04em}
.sun{width:26px;height:26px;margin:-3px 0 0 27px}
.wx{width:631px;margin:-4px 0 0 11px;display:flex;flex-direction:column;line-height:20px;letter-spacing:-.025em}
.wx span+span{color:#bfbfbf}
.win{width:30px;height:30px}
.tsearch{width:274px;height:40px;margin:-1px 0 0 16px;border-radius:20px;background:#3a3939;border:1px solid #444;display:flex;align-items:center;padding-left:14px;font-size:17px;color:#d0d0d0}
.tmag{width:18px;height:20px}
.tsearch span{margin-left:13px;flex:1}
.art{width:70px;height:34px;margin-right:0}
.tview{width:30px;height:29px;margin-left:16px}
.app{width:50px;height:50px;margin-left:5px;border-radius:6px;display:flex;flex-direction:column;align-items:center;justify-content:space-between;padding-top:9px}
.app.on{margin-left:15px;background:#2d2c2c;border:1px solid #383737}
.app i{width:9px;height:4px;border-radius:2px;background:#999}
.app.on i{width:20px;background:#4cc2ff}
.tlion{width:26px;height:31px}
.code svg{width:30px;height:31px}
.files svg{width:31px;height:28px;margin-top:2px}
.tray{margin:-1px 0 0 auto;display:flex;align-items:center;padding-right:25px}
.up{width:14px;height:10px}
.eng{margin-left:25px;width:30px}
.wifi{width:20px;height:16px;margin-left:22px}
.snd{width:20px;height:16px;margin-left:9px}
.batt{width:20px;height:18px;margin-left:10px}
.clock{width:99px;text-align:right;line-height:20px;display:flex;flex-direction:column;margin-top:-2px;letter-spacing:-.028em}
.badge{width:20px;height:20px;border-radius:50%;margin-left:9px;background:#4cc2ff;color:#10202c;font-size:13px;line-height:19px;text-align:center}
```
